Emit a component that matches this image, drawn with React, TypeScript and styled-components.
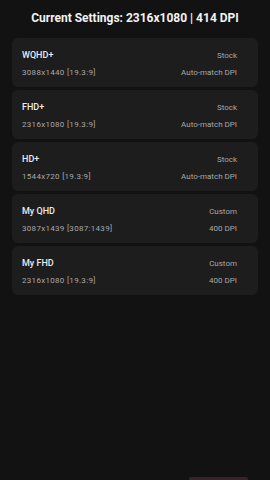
import React from 'react';
import styled, { createGlobalStyle } from 'styled-components';

const GlobalStyle = createGlobalStyle`
    html, body {
        margin: 0;
        padding: 0;
        background: #121212;
    }
    body {
        font-family: Roboto, "Noto Sans", "Liberation Sans", sans-serif;
    }
`;

const Screen = styled.div`
    position: relative;
    width: 270px;
    height: 480px;
    overflow: hidden;
    background: #121212;
    box-sizing: border-box;
    padding: 10px 12px 0;
`;

const Header = styled.div`
    color: #f2f2f2;
    font-size: 12px;
    font-weight: 700;
    text-align: center;
    line-height: 17px;
    height: 18px;
    margin-bottom: 10px;
`;

const List = styled.div`
    display: flex;
    flex-direction: column;
    gap: 3px;
`;

const Card = styled.div`
    background: #1d1d1d;
    border-radius: 6px;
    height: 49px;
    box-sizing: border-box;
    padding: 11px 21px 0 10px;
    display: flex;
    flex-direction: column;
    gap: 5px;
`;

const Row = styled.div`
    display: flex;
    justify-content: space-between;
    align-items: center;
    height: 12px;
`;

const Name = styled.span`
    color: #ececec;
    font-size: 9px;
    font-weight: 500;
`;

const Info = styled.span<{ $wide?: boolean }>`
    color: #a8a8a8;
    font-size: 8px;
    letter-spacing: ${props => props.$wide ? '0.3px' : '0'};
`;

const Peek = styled.div`
    position: absolute;
    left: 189px;
    bottom: 0;
    width: 59px;
    height: 3px;
    border-radius: 2px 2px 0 0;
    background: #3a2228;
`;

type TMode = {
    name: string;
    res: string;
    kind: string;
    dpi: string;
};

const modes: TMode[] = [
    { name: 'WQHD+', res: '3088x1440 [19.3:9]', kind: 'Stock', dpi: 'Auto-match DPI' },
    { name: 'FHD+', res: '2316x1080 [19.3:9]', kind: 'Stock', dpi: 'Auto-match DPI' },
    { name: 'HD+', res: '1544x720 [19.3:9]', kind: 'Stock', dpi: 'Auto-match DPI' },
    { name: 'My QHD', res: '3087x1439 [3087:1439]', kind: 'Custom', dpi: '400 DPI' },
    { name: 'My FHD', res: '2316x1080 [19.3:9]', kind: 'Custom', dpi: '400 DPI' },
];

const App = () => (
    <>
        <GlobalStyle />
        <Screen>
            <Header>Current Settings: 2316x1080 | 414 DPI</Header>
            <List>
                {modes.map(m => (
                    <Card key={m.name}>
                        <Row>
                            <Name>{m.name}</Name>
                            <Info>{m.kind}</Info>
                        </Row>
                        <Row>
                            <Info $wide>{m.res}</Info>
                            <Info>{m.dpi}</Info>
                        </Row>
                    </Card>
                ))}
            </List>
            <Peek />
        </Screen>
    </>
);

export default App;
